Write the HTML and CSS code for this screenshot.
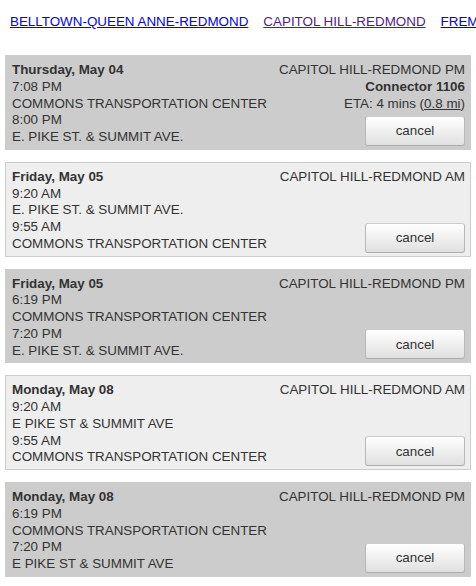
FILE: index.html
```html
<!DOCTYPE html>
<html>
<head>
<meta charset="utf-8">
<link rel="stylesheet" href="styles.css">
</head>
<body>
<nav class="routes">
  <a href="#a" class="route">BELLTOWN-QUEEN ANNE-REDMOND</a>
  <a href="#b" class="route visited">CAPITOL HILL-REDMOND</a>
  <a href="#c" class="route">FREMONT-REDMOND</a>
</nav>
<div class="trips">
  <div class="trip active">
    <div class="info">
      <div class="day">Thursday, May 04</div>
      <div>7:08 PM</div>
      <div>COMMONS TRANSPORTATION CENTER</div>
      <div>8:00 PM</div>
      <div>E. PIKE ST. &amp; SUMMIT AVE.</div>
    </div>
    <div class="side">
      <div>CAPITOL HILL-REDMOND PM</div>
      <div class="bus">Connector 1106</div>
      <div>ETA: 4 mins (<a href="#m" class="dist">0.8 mi</a>)</div>
      <button class="cancel">cancel</button>
    </div>
  </div>
  <div class="trip light">
    <div class="info">
      <div class="day">Friday, May 05</div>
      <div>9:20 AM</div>
      <div>E. PIKE ST. &amp; SUMMIT AVE.</div>
      <div>9:55 AM</div>
      <div>COMMONS TRANSPORTATION CENTER</div>
    </div>
    <div class="side">
      <div>CAPITOL HILL-REDMOND AM</div>
      <button class="cancel">cancel</button>
    </div>
  </div>
  <div class="trip dark">
    <div class="info">
      <div class="day">Friday, May 05</div>
      <div>6:19 PM</div>
      <div>COMMONS TRANSPORTATION CENTER</div>
      <div>7:20 PM</div>
      <div>E. PIKE ST. &amp; SUMMIT AVE.</div>
    </div>
    <div class="side">
      <div>CAPITOL HILL-REDMOND PM</div>
      <button class="cancel">cancel</button>
    </div>
  </div>
  <div class="trip light">
    <div class="info">
      <div class="day">Monday, May 08</div>
      <div>9:20 AM</div>
      <div>E PIKE ST &amp; SUMMIT AVE</div>
      <div>9:55 AM</div>
      <div>COMMONS TRANSPORTATION CENTER</div>
    </div>
    <div class="side">
      <div>CAPITOL HILL-REDMOND AM</div>
      <button class="cancel">cancel</button>
    </div>
  </div>
  <div class="trip dark">
    <div class="info">
      <div class="day">Monday, May 08</div>
      <div>6:19 PM</div>
      <div>COMMONS TRANSPORTATION CENTER</div>
      <div>7:20 PM</div>
      <div>E PIKE ST &amp; SUMMIT AVE</div>
    </div>
    <div class="side">
      <div>CAPITOL HILL-REDMOND PM</div>
      <button class="cancel">cancel</button>
    </div>
  </div>
</div>
</body>
</html>
```
FILE: styles.css
```css
html, body {
  margin: 0;
  padding: 0;
  background: #fff;
  overflow: hidden;
}
body {
  font-family: "Liberation Sans", Arial, sans-serif;
  font-size: 13.4px;
  line-height: 16.75px;
  color: #333;
}
.routes {
  display: flex;
  gap: 15px;
  white-space: nowrap;
  padding: 14px 0 0 10px;
  height: 55px;
  box-sizing: border-box;
  overflow: hidden;
}
.route {
  color: #0000ee;
  text-decoration: underline;
}
.route.visited {
  color: #551a8b;
}
.trips {
  display: flex;
  flex-direction: column;
  gap: 12px;
  padding: 0 5px;
}
.trip {
  display: flex;
  justify-content: space-between;
  border: 1px solid #ccc;
  padding: 6px 5px 3px 6px;
  white-space: nowrap;
}
.trip.active, .trip.dark {
  background: #ccc;
}
.trip.light {
  background: #eee;
}
.info {
  flex: 1;
}
.day {
  font-weight: bold;
}
.side {
  display: flex;
  flex-direction: column;
  align-items: flex-end;
  text-align: right;
}
.bus {
  font-weight: bold;
}
.dist {
  color: #333;
  text-decoration: underline;
}
.cancel {
  margin-top: auto;
  width: 100px;
  height: 30px;
  font-family: "Liberation Sans", Arial, sans-serif;
  font-size: 13.4px;
  color: #333;
  background: linear-gradient(to bottom, #fff 0%, #e0e0e0 100%);
  border: 1px solid #adadad;
  border-color: #ccc #b8b8b8 #adadad #b8b8b8;
  border-radius: 3px;
  padding: 0;
  cursor: pointer;
}
```
